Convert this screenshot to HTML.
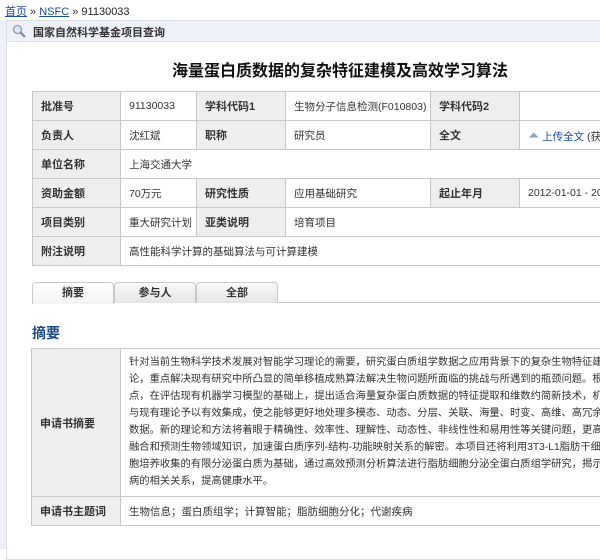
<!DOCTYPE html>
<html><head><meta charset="utf-8"><style>
*{margin:0;padding:0;box-sizing:border-box}
body{width:600px;height:549px;overflow:hidden;background:#fff;font-family:"Liberation Sans","Noto Sans CJK SC",sans-serif;font-size:10.5px;color:#333;position:relative}
.a{position:absolute;white-space:nowrap}
a{color:#1a4a9a}
.strip{position:absolute;left:0;top:20px;width:6px;height:529px;background:#eef1f7}
.box{position:absolute;left:6px;top:20px;width:700px;height:540px;border:1px solid #d8dde6;border-right:none}
.hdr{position:absolute;left:7px;top:21px;width:600px;height:21px;background:#eef1f7;border-bottom:1px solid #dde2ea}
table{border-collapse:collapse;position:absolute;table-layout:fixed}
td{border:1px solid #c8c8c8;height:29px;padding:0 0 0 8px;vertical-align:middle;white-space:nowrap;overflow:hidden}
td.l{background:#eeeeee;font-weight:bold;color:#333;font-size:11px}
.tab{position:absolute;top:282px;height:21px;width:82px;border:1px solid #c8c8c8;border-bottom:none;border-radius:4px 4px 0 0;background:linear-gradient(#fafafa,#e6e6e6);text-align:center;line-height:20px;font-weight:bold;font-size:11px}
.ab div{height:17px;line-height:17px;white-space:nowrap;font-size:10.3px}
</style></head><body>
<div class="a" style="left:5px;top:3px;font-size:11px"><a href="#">首页</a> » <a href="#">NSFC</a> » <span style="color:#222">91130033</span></div>
<div class="strip"></div>
<div class="box"></div>
<div class="hdr"></div>
<svg class="a" style="left:12px;top:24px" width="14" height="14" viewBox="0 0 14 14"><circle cx="5.5" cy="5.5" r="4" fill="#dde8f5" stroke="#8a9ab0" stroke-width="1.3"/><line x1="8.5" y1="8.5" x2="13" y2="13" stroke="#7a8aa0" stroke-width="2.2"/></svg>
<div class="a" style="left:33px;top:24px;font-size:11px;font-weight:bold;color:#333">国家自然科学基金项目查询</div>
<div class="a" style="left:172px;top:57px;font-size:16px;font-weight:bold;color:#111">海量蛋白质数据的复杂特征建模及高效学习算法</div>
<table style="left:32px;top:91px;width:648px">
<colgroup><col style="width:88px"><col style="width:76px"><col style="width:89px"><col style="width:145px"><col style="width:89px"><col style="width:161px"></colgroup>
<tr><td class="l">批准号</td><td>91130033</td><td class="l">学科代码1</td><td>生物分子信息检测(F010803)</td><td class="l">学科代码2</td><td></td></tr>
<tr><td class="l">负责人</td><td>沈红斌</td><td class="l">职称</td><td>研究员</td><td class="l">全文</td><td><span style="color:#8aa4c4;font-size:14px">⏶</span> <a href="#" style="text-decoration:none">上传全文</a> (获5</td></tr>
<tr><td class="l">单位名称</td><td colspan="5">上海交通大学</td></tr>
<tr><td class="l">资助金额</td><td>70万元</td><td class="l">研究性质</td><td>应用基础研究</td><td class="l">起止年月</td><td>2012-01-01 - 2015-12-31</td></tr>
<tr><td class="l">项目类别</td><td>重大研究计划</td><td class="l">亚类说明</td><td colspan="3">培育项目</td></tr>
<tr><td class="l">附注说明</td><td colspan="5">高性能科学计算的基础算法与可计算建模</td></tr>
</table>
<div class="a" style="left:32px;top:302px;width:600px;height:1px;background:#c8c8c8"></div>
<div class="tab" style="left:32px;background:linear-gradient(#fff,#f4f4f4);height:22px">摘要</div>
<div class="tab" style="left:114px">参与人</div>
<div class="tab" style="left:196px">全部</div>
<div class="a" style="left:32px;top:323px;font-size:14px;color:#1a4a8a;font-weight:bold">摘要</div>
<table style="left:31px;top:348px;width:660px">
<colgroup><col style="width:89px"><col style="width:571px"></colgroup>
<tr><td class="l" style="height:147px">申请书摘要</td><td class="ab" style="padding:5px 0 6px 8px">
<div>针对当前生物科学技术发展对智能学习理论的需要，研究蛋白质组学数据之应用背景下的复杂生物特征建模和机器学习</div>
<div>论，重点解决现有研究中所凸显的简单移植成熟算法解决生物问题所面临的挑战与所遇到的瓶颈问题。根据蛋白质组</div>
<div>点，在评估现有机器学习模型的基础上，提出适合海量复杂蛋白质数据的特征提取和维数约简新技术，机器学习新理论</div>
<div>与现有理论予以有效集成，使之能够更好地处理多模态、动态、分层、关联、海量、时变、高维、高冗余和高噪声生物</div>
<div>数据。新的理论和方法将着眼于精确性、效率性、理解性、动态性、非线性性和易用性等关键问题，更高效地提取、</div>
<div>融合和预测生物领域知识，加速蛋白质序列-结构-功能映射关系的解密。本项目还将利用3T3-L1脂肪干细胞分化模型</div>
<div>胞培养收集的有限分泌蛋白质为基础，通过高效预测分析算法进行脂肪细胞分泌全蛋白质组学研究，揭示他们和肥胖</div>
<div>病的相关关系，提高健康水平。</div></td></tr>
<tr><td class="l" style="height:29px">申请书主题词</td><td>生物信息；蛋白质组学；计算智能；脂肪细胞分化；代谢疾病</td></tr>
</table>
</body></html>
